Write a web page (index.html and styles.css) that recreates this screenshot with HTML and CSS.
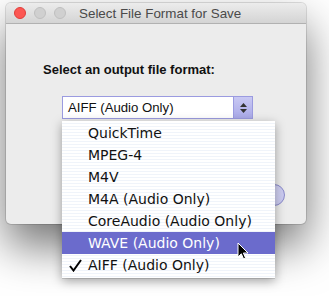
FILE: index.html
```html
<!DOCTYPE html>
<html lang="en">
<head>
    <meta charset="UTF-8">
    <title>Select File Format for Save</title>
    <link rel="stylesheet" href="styles.css">
</head>
<body>
    <!-- dialog window -->
    <div class="window">
        <div class="titlebar">
            <div class="lights">
                <span class="light close"></span>
                <span class="light"></span>
                <span class="light"></span>
            </div>
            <div class="title">Select File Format for Save</div>
        </div>
        <div class="content">
            <p class="prompt">Select an output file format:</p>
            <div class="popup">
                <span class="popup-value">AIFF (Audio Only)</span>
                <span class="popup-arrows">
                    <svg width="9" height="12" viewBox="0 0 9 12"><path d="M4.5 1 L8 5 H1 Z M4.5 11 L8 7 H1 Z" fill="#333"/></svg>
                </span>
            </div>
            <div class="buttons">
                <button class="btn default">OK</button>
            </div>
        </div>
    </div>

    <!-- open popup menu -->
    <ul class="menu">
        <li>QuickTime</li>
        <li>MPEG-4</li>
        <li>M4V</li>
        <li>M4A (Audio Only)</li>
        <li>CoreAudio (Audio Only)</li>
        <li class="selected">WAVE (Audio Only)</li>
        <li class="checked">
            <svg class="check" width="13" height="13" viewBox="0 0 13 13"><path d="M1 7 L4.5 11.5 L12 1" fill="none" stroke="#000" stroke-width="2"/></svg>
            AIFF (Audio Only)
        </li>
    </ul>

    <svg class="cursor" width="12" height="19" viewBox="0 0 12 19"><path d="M1 1 L1 15 L4.3 11.8 L6.6 17 L8.6 16.1 L6.4 11 L11 11 Z" fill="#000" stroke="#fff" stroke-width="1"/></svg>
</body>
</html>
```
FILE: styles.css
```css
* {
    margin: 0;
    padding: 0;
    box-sizing: border-box;
}

body {
    background: #fff;
    font-family: "Liberation Sans", Arial, sans-serif;
    width: 329px;
    height: 296px;
    overflow: hidden;
    position: relative;
}

.window {
    margin: 3px 0 0 6px;
    width: 300px;
    height: 221px;
    background: #ececec;
    border-radius: 5px;
    box-shadow: 0 0 0 1px rgba(0,0,0,0.12), 0 22px 45px rgba(0,0,0,0.55);
    overflow: hidden;
}

/* title bar */
.titlebar {
    height: 21px;
    display: flex;
    align-items: center;
    background: linear-gradient(#ececec, #d4d4d4);
    border-bottom: 1px solid #b1b1b1;
}

.lights {
    display: flex;
    gap: 8px;
    padding-left: 8px;
}

.light {
    width: 12px;
    height: 12px;
    border-radius: 50%;
    background: #d0d0d0;
    border: 1px solid #bfbfbf;
}

.light.close {
    background: #fc5753;
    border-color: #df3e3a;
}

.title {
    margin-left: 13px;
    font-size: 13.4px;
    color: #4a4a4a;
}

/* dialog body */
.content {
    padding: 38px 0 0 37px;
}

.prompt {
    font-size: 13px;
    font-weight: bold;
    color: #111;
    line-height: 16px;
}

.popup {
    margin: 18px 0 0 19px;
    width: 191px;
    height: 23px;
    display: flex;
    border: 1px solid #9b9be0;
    background: #fff;
}

.popup-value {
    flex: 1;
    font-size: 13.2px;
    line-height: 21px;
    padding-left: 5px;
    color: #111;
}

.popup-arrows {
    width: 19px;
    display: flex;
    align-items: center;
    justify-content: center;
    border-left: 1px solid #9b9be0;
    background: linear-gradient(#c9c9f3, #a9a9e8);
}

.buttons {
    display: flex;
    justify-content: flex-end;
    padding: 65px 21px 0 0;
}

.btn {
    width: 70px;
    height: 22px;
    border-radius: 11px;
    border: 1px solid #8a8acb;
    background: radial-gradient(circle at 70% 40%, #e2e2f9, #a5a5e4);
    font-family: "Liberation Sans", Arial, sans-serif;
    font-size: 13px;
}

/* popup menu, lies over the dialog */
.menu {
    position: absolute;
    left: 62px;
    top: 121px;
    width: 213px;
    list-style: none;
    padding: 1px 0 2px;
    background: repeating-linear-gradient(#fff 0 2px, #f0f4fa 2px 3px);
    box-shadow: 0 1px 0 rgba(0,0,0,0.12), 0 3px 10px rgba(0,0,0,0.35);
    font-family: "DejaVu Sans", sans-serif;
    font-size: 14px;
}

.menu li {
    height: 22px;
    line-height: 22px;
    padding-left: 26px;
    color: #111;
    position: relative;
}

.menu li.selected {
    background: #6b6bcc;
    color: #fff;
}

.check {
    position: absolute;
    left: 7px;
    top: 5px;
}

.cursor {
    position: absolute;
    left: 237px;
    top: 242px;
}
```
